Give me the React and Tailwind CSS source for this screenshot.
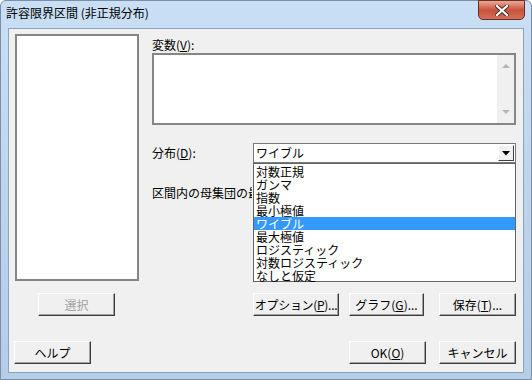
import React from "react";

const font = { fontFamily: '"Noto Sans CJK JP", "Noto Sans", sans-serif' };

// classic 3D push button
function Btn({ w = "w-[77px]", disabled, className = "", children }) {
  return (
    <div
      className={`${w} h-[23px] flex items-center justify-center whitespace-nowrap text-[12px] leading-none bg-[#f0f0f0] border border-t-white border-l-white border-r-[#3c3c3c] border-b-[#3c3c3c] shadow-[inset_-1px_-1px_0_#a0a0a0] ${
        disabled ? "text-[#a0a0a0]" : "text-black"
      } ${className}`}
    >
      {children}
    </div>
  );
}

const items = [
  "対数正規",
  "ガンマ",
  "指数",
  "最小極値",
  "ワイブル",
  "最大極値",
  "ロジスティック",
  "対数ロジスティック",
  "なしと仮定",
];

export default function App() {
  return (
    <div className="w-[532px] h-[380px] overflow-hidden bg-white" style={font}>
      {/* ================= WINDOW FRAME ================= */}
      <div className="w-[532px] h-[380px] flex flex-col rounded-t-[6px] border border-[#7b8ea6] bg-gradient-to-b from-[#c9dff5] via-[#bcd4ee] to-[#b4cde8]">
        {/* Title bar */}
        <div className="h-[27px] flex items-start shrink-0">
          <div className="ml-[5px] mt-[5px] text-[12px] leading-[14px] text-black">
            許容限界区間 (非正規分布)
          </div>
          <div className="ml-auto mr-[6px] mt-[-1px] w-[47px] h-[20px] rounded-b-[5px] border border-[#6e2d22] bg-gradient-to-b from-[#e9a898] via-[#c9513b] to-[#d0705a] flex items-center justify-center">
            <svg width="14" height="11" viewBox="0 0 14 11">
              <path d="M2 1 L12 10 M12 1 L2 10" stroke="#4a2a24" strokeWidth="4" strokeLinecap="square" />
              <path d="M2 1 L12 10 M12 1 L2 10" stroke="#ffffff" strokeWidth="2.2" strokeLinecap="square" />
            </svg>
          </div>
        </div>

        {/* Client area */}
        <div className="ml-[7px] mr-[7px] w-[516px] h-[345px] bg-[#f0f0f0] border border-[#8da2bb] flex flex-col text-[12px] text-black">
          {/* ---------- TOP ---------- */}
          <div className="flex mt-[5px] h-[247px]">
            {/* Variable list */}
            <div className="ml-[6px] w-[124px] h-[247px] bg-white border-2 border-[#858585]" />

            {/* Right panel */}
            <div className="ml-[13px] w-[364px] flex flex-col">
              <div className="mt-[4px] leading-[14px]">
                変数(<span className="underline">V</span>):
              </div>
              <div className="mt-[1px] h-[72px] bg-white border-2 border-[#868686] flex">
                <div className="flex-1" />
                <div className="w-[17px] bg-[#f0f0f0] flex flex-col items-center justify-between py-[8px]">
                  <svg width="8" height="5" viewBox="0 0 8 5">
                    <path d="M0 5 L4 1 L8 5 Z" fill="#b5b5b5" />
                  </svg>
                  <svg width="8" height="5" viewBox="0 0 8 5">
                    <path d="M0 0 L8 0 L4 4 Z" fill="#b5b5b5" />
                  </svg>
                </div>
              </div>

              {/* Distribution combo */}
              <div className="mt-[18px] flex items-center relative">
                <div className="w-[101px] leading-[14px]">
                  分布(<span className="underline">D</span>):
                </div>
                <div className="w-[263px] h-[20px] bg-white border border-[#7a7a7a] flex items-center">
                  <span className="ml-[2px] leading-none">ワイブル</span>
                  <div className="ml-auto mr-[1px] w-[16px] h-[16px] bg-[#f0f0f0] border border-t-white border-l-white border-r-[#404040] border-b-[#404040] flex items-center justify-center">
                    <svg width="8" height="5" viewBox="0 0 8 5">
                      <path d="M0 0 L8 0 L4 4.5 Z" fill="#000" />
                    </svg>
                  </div>
                </div>

                {/* Dropdown popup */}
                <div className="absolute left-[101px] top-[20px] w-[263px] h-[119px] bg-white border border-[#646464] z-10 flex flex-col py-[1px]">
                  {items.map((it) => (
                    <div
                      key={it}
                      className={`h-[13px] leading-[13px] pl-[2px] text-[12px] ${
                        it === "ワイブル" ? "bg-[#3399ff] text-white" : "text-black"
                      }`}
                    >
                      {it}
                    </div>
                  ))}
                </div>
              </div>

              {/* label partly hidden behind the open list */}
              <div className="mt-[23px] w-[100px] overflow-hidden whitespace-nowrap leading-[14px]">
                区間内の母集団の最小割合(<span className="underline">P</span>):
              </div>
            </div>
          </div>

          {/* ---------- BUTTON ROW ---------- */}
          <div className="flex mt-[12px]">
            <Btn disabled className="ml-[29px]">選択</Btn>
            <Btn w="w-[86px]" className="ml-[138px] tracking-[-0.3px]">
              オプション(<span className="underline">P</span>)...
            </Btn>
            <Btn w="w-[75px]" className="ml-[10px]">
              グラフ(<span className="underline">G</span>)...
            </Btn>
            <Btn className="ml-[15px]">
              保存(<span className="underline">T</span>)...
            </Btn>
          </div>

          {/* ---------- BOTTOM ROW ---------- */}
          <div className="flex mt-[25px]">
            <Btn className="ml-[5px]">ヘルプ</Btn>
            <Btn className="ml-[258px]">
              OK(<span className="underline">O</span>)
            </Btn>
            <Btn className="ml-[13px]">キャンセル</Btn>
          </div>
        </div>
      </div>
    </div>
  );
}
